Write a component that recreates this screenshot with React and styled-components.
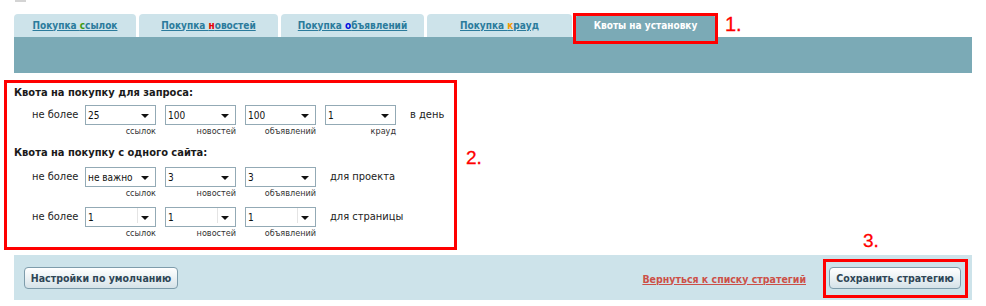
import React from "react";
import styled, { createGlobalStyle, css } from "styled-components";

const Global = createGlobalStyle`
  html, body { margin: 0; padding: 0; background: #fff; }
  body { font-family: "DejaVu Sans Condensed", "DejaVu Sans", sans-serif; font-size: 11px; color: #222; }
`;

const Page = styled.div`
  width: 986px;
  height: 306px;
  overflow: hidden;
  position: relative;
`;

const Stub = styled.div`
  width: 11px;
  height: 2px;
  margin-left: 15px;
  background: #d4d4d4;
  margin-bottom: 12px;
`;

const TabRow = styled.div`
  display: flex;
  align-items: flex-end;
  gap: 3px;
  margin-left: 14px;
  height: 23px;
`;

const Tab = styled.div`
  position: relative;
  width: ${(p) => p.$w}px;
  height: 23px;
  border-radius: 4px 4px 0 0;
  background: ${(p) => (p.$active ? "#7baab6" : "#cde3ea")};
  display: flex;
  align-items: center;
  justify-content: center;
  font-weight: bold;
  font-size: 10px;
  color: ${(p) => (p.$active ? "#fff" : "#2b7b9c")};
  text-decoration: ${(p) => (p.$active ? "none" : "underline")};
  padding-bottom: 1px;
  box-sizing: border-box;
  white-space: nowrap;
  ${(p) =>
    p.$active &&
    css`
      margin-left: 1px;
      &::after {
        content: "";
        position: absolute;
        left: -3px;
        right: -3px;
        top: -1px;
        bottom: -7px;
        border: 3px solid #f00;
      }
    `}
`;

const Hl = styled.span`
  color: ${(p) => p.$c};
`;

const Note = styled.span`
  position: absolute;
  font-family: "Liberation Sans", Arial, sans-serif;
  font-size: ${(p) => p.$size || 20}px;
  color: #f00;
  line-height: 1;
  left: ${(p) => p.$x}px;
  top: ${(p) => p.$y}px;
  -webkit-text-stroke: 0.3px #f00;
`;

const Bar = styled.div`
  margin-left: 14px;
  width: 958px;
  height: 36px;
  background: #7baab6;
`;

const FormRow = styled.div`
  display: flex;
  align-items: flex-start;
  margin-top: 7px;
  margin-left: 4px;
`;

const FormBox = styled.div`
  width: 453px;
  height: 170px;
  box-sizing: border-box;
  border: 3px solid #f00;
  padding: 3px 0 0 7px;
`;

const FormNote = styled.span`
  font-family: "Liberation Sans", Arial, sans-serif;
  font-size: 19px;
  color: #f00;
  line-height: 1;
  margin: 68px 0 0 9px;
  -webkit-text-stroke: 0.3px #f00;
`;

const Heading = styled.div`
  font-weight: bold;
  font-size: 11px;
  line-height: 14px;
  color: #1a1a1a;
  margin-top: ${(p) => p.$mt || 0}px;
`;

const Row = styled.div`
  display: flex;
  align-items: flex-start;
  padding-left: 18px;
  margin-top: ${(p) => p.$mt}px;
`;

const Lead = styled.span`
  width: 53px;
  line-height: 20px;
  font-size: 11px;
  color: #222;
`;

const Field = styled.div`
  display: flex;
  flex-direction: column;
  align-items: flex-end;
  width: 71px;
  margin-right: 9px;
`;

const Select = styled.div`
  position: relative;
  width: 100%;
  height: 20px;
  box-sizing: border-box;
  border: 1px solid #93aab5;
  background: #fff;
  display: flex;
  align-items: center;
  padding-left: 2px;
  font-size: 10px;
  color: #111;
  white-space: nowrap;
  &::after {
    content: "";
    position: absolute;
    right: 6px;
    top: 8px;
    border-left: 4px solid transparent;
    border-right: 4px solid transparent;
    border-top: 4px solid #111;
  }
  ${(p) =>
    p.$split &&
    css`
      &::before {
        content: "";
        position: absolute;
        right: 17px;
        top: 0;
        bottom: 3px;
        border-left: 1px solid #e4e4e4;
      }
    `}
`;

const Caption = styled.span`
  font-size: 9px;
  line-height: 12px;
  color: #333;
`;

const Tail = styled.span`
  line-height: 20px;
  font-size: 11px;
  color: #222;
  margin-left: 5px;
`;

const Footer = styled.div`
  position: relative;
  margin: 5px 0 0 14px;
  width: 958px;
  height: 45px;
  box-sizing: border-box;
  background: #cde3ea;
  display: flex;
  align-items: center;
  padding: 1px 11px 0 10px;
`;

const Button = styled.button`
  height: 22px;
  width: ${(p) => p.$w}px;
  padding: 0;
  border: 1px solid #7e9cab;
  border-radius: 4px;
  background: linear-gradient(#ffffff, #e9f0f3 55%, #d5e2e8);
  box-shadow: inset 0 1px 0 #fff;
  font-family: "DejaVu Sans Condensed", "DejaVu Sans", sans-serif;
  font-weight: bold;
  font-size: 10.5px;
  color: #2f4656;
  white-space: nowrap;
  cursor: pointer;
`;

const Spacer = styled.div`
  flex: 1;
`;

const BackLink = styled.a`
  font-weight: bold;
  font-size: 10.5px;
  color: #cc5048;
  text-decoration: underline;
  margin-right: 23px;
  margin-top: 1px;
  white-space: nowrap;
`;

const Marked = styled.div`
  position: relative;
  display: flex;
  &::after {
    content: "";
    position: absolute;
    left: -6px;
    right: -7px;
    top: -8px;
    bottom: -9px;
    border: 3px solid #f00;
  }
`;

const tabs = [
  { w: 122, pre: "Покупка ", hl: "с", c: "#3d9a12", post: "сылок" },
  { w: 139, pre: "Покупка ", hl: "н", c: "#e60000", post: "овостей" },
  { w: 143, pre: "Покупка ", hl: "о", c: "#0010e0", post: "бъявлений" },
  { w: 145, pre: "Покупка ", hl: "к", c: "#f39a00", post: "рауд" },
];

function QuotaRow({ mt, fields, tail, split }) {
  return (
    <Row $mt={mt}>
      <Lead>не более</Lead>
      {fields.map((f, i) => (
        <Field key={i}>
          <Select $split={split}>{f.v}</Select>
          <Caption>{f.c}</Caption>
        </Field>
      ))}
      <Tail>{tail}</Tail>
    </Row>
  );
}

export default function App() {
  return (
    <Page>
      <Global />
      <Stub />
      <TabRow>
        {tabs.map((t, i) => (
          <Tab key={i} $w={t.w}>
            <span>
              {t.pre}
              <Hl $c={t.c}>{t.hl}</Hl>
              {t.post}
            </span>
          </Tab>
        ))}
        <Tab $w={139} $active>
          Квоты на установку
        </Tab>
      </TabRow>
      <Note $x={725} $y={14}>1.</Note>
      <Bar />
      <FormRow>
        <FormBox>
          <Heading>Квота на покупку для запроса:</Heading>
          <QuotaRow
            mt={5}
            tail="в день"
            fields={[
              { v: "25", c: "ссылок" },
              { v: "100", c: "новостей" },
              { v: "100", c: "объявлений" },
              { v: "1", c: "крауд" },
            ]}
          />
          <Heading $mt={9}>Квота на покупку с одного сайта:</Heading>
          <QuotaRow
            mt={7}
            tail="для проекта"
            fields={[
              { v: "не важно", c: "ссылок" },
              { v: "3", c: "новостей" },
              { v: "3", c: "объявлений" },
            ]}
          />
          <QuotaRow
            mt={8}
            split
            tail="для страницы"
            fields={[
              { v: "1", c: "ссылок" },
              { v: "1", c: "новостей" },
              { v: "1", c: "объявлений" },
            ]}
          />
        </FormBox>
        <FormNote>2.</FormNote>
      </FormRow>
      <Footer>
        <Button $w={154}>Настройки по умолчанию</Button>
        <Spacer />
        <BackLink href="#">Вернуться к списку стратегий</BackLink>
        <Marked>
          <Button $w={132}>Сохранить стратегию</Button>
          <Note $size={19} $x={34} $y={-36}>3.</Note>
        </Marked>
      </Footer>
    </Page>
  );
}
